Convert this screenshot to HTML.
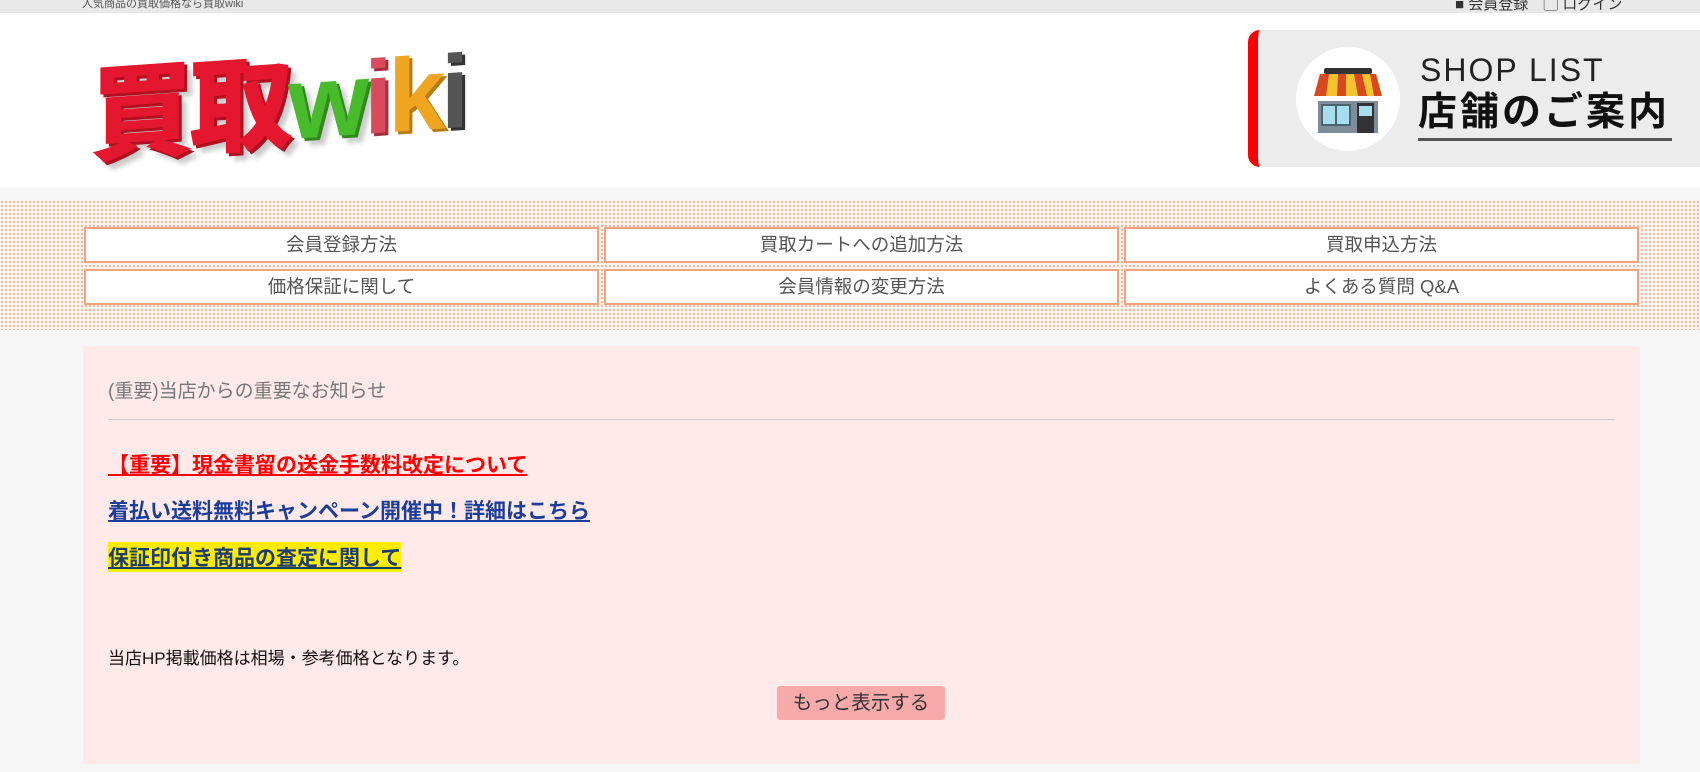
<!DOCTYPE html>
<html><head><meta charset="utf-8"><style>
*{margin:0;padding:0;box-sizing:border-box}
body{width:1700px;height:772px;overflow:hidden;background:#f6f6f6;font-family:"Liberation Sans","Noto Sans CJK JP",sans-serif;position:relative}
.top{position:absolute;left:0;top:0;width:1700px;height:13px;background:#e9e8e8;font-size:11px;color:#555;overflow:hidden}
.header{position:absolute;left:0;top:13px;width:1700px;height:174px;background:#fff}
.band{position:absolute;left:0;top:200px;width:1700px;height:130px;background-color:#fbf3ee;background-image:radial-gradient(circle,#f0a98a 0.8px,transparent 1.1px);background-size:4px 4px}
.btn{position:absolute;background:#fff;border:2px solid #f3a27f;font-size:18.5px;color:#555;text-align:center;line-height:31px;height:36px}
.box{position:absolute;left:83px;top:346px;width:1557px;height:418px;background:#ffe9e9}
a{font-weight:bold;font-size:21px;text-decoration:underline;position:absolute;left:25px}
</style></head><body>
<div class="top"><span style="position:absolute;left:82px;top:-5px">人気商品の買取価格なら買取wiki</span><span style="position:absolute;left:1455px;top:-7px;font-size:15px;color:#333">■ 会員登録　▢ ログイン</span></div>
<div class="header">
 <div style="position:absolute;left:90px;top:22px;font-weight:900;font-size:104px;letter-spacing:-5px;line-height:120px;font-family:'Noto Sans CJK JP',sans-serif;transform:skewY(-4deg)">
  <span style="color:#e5172e;text-shadow:3px 3px 0 #b0101f,8px 8px 5px #ccc">買取</span><span style="color:#48bb2c;text-shadow:3px 3px 0 #2e8a1a,8px 8px 5px #ccc;font-family:'Liberation Sans'">w</span><span style="color:#d84a5c;text-shadow:3px 3px 0 #a03040;font-family:'Liberation Sans'">i</span><span style="color:#f0a520;text-shadow:3px 3px 0 #b67a10;font-family:'Liberation Sans'">k</span><span style="color:#555;text-shadow:3px 3px 0 #333;font-family:'Liberation Sans'">i</span>
 </div>
 <div style="position:absolute;left:1248px;top:17px;width:452px;height:137px;background:#ececec;border-left:10px solid #f00;border-radius:12px 0 0 12px">
  <div style="position:absolute;left:38px;top:17px;width:104px;height:104px;border-radius:50%;background:#fff">
   <svg width="104" height="104" viewBox="0 0 104 104">
    <rect x="22" y="54" width="60" height="32" fill="#7f8c99"/>
    <rect x="26" y="58" width="28" height="20" fill="#a8dcef" stroke="#4a6470" stroke-width="2"/>
    <line x1="40" y1="58" x2="40" y2="78" stroke="#4a6470" stroke-width="2"/>
    <rect x="61" y="56" width="17" height="30" fill="#333"/>
    <rect x="63" y="59" width="13" height="10" fill="#a8dcef"/>
    <rect x="28" y="21" width="48" height="6" rx="2" fill="#333"/>
    <path d="M24 27h56l6 22H18z" fill="#f4c430"/>
    <path d="M24 27h9l-3 22h-12zM42 27h8l0 22h-9zM58 27h8l5 22h-9zM74 27h6l6 22h-8z" fill="#d9481f"/>
   </svg>
  </div>
  <div style="position:absolute;left:162px;top:22px;font-size:32px;letter-spacing:2px;color:#222">SHOP LIST</div>
  <div style="position:absolute;left:160px;top:58px;font-size:39px;font-weight:bold;color:#111;letter-spacing:3px;border-bottom:3px solid #555;line-height:50px;padding-right:2px">店舗のご案内</div>
 </div>
</div>
<div class="band"></div>
<div class="btn" style="left:84px;top:227px;width:515px">会員登録方法</div>
<div class="btn" style="left:604px;top:227px;width:515px">買取カートへの追加方法</div>
<div class="btn" style="left:1124px;top:227px;width:515px">買取申込方法</div>
<div class="btn" style="left:84px;top:269px;width:515px">価格保証に関して</div>
<div class="btn" style="left:604px;top:269px;width:515px">会員情報の変更方法</div>
<div class="btn" style="left:1124px;top:269px;width:515px">よくある質問 Q&amp;A</div>
<div class="box">
 <div style="position:absolute;left:25px;top:30px;font-size:19px;color:#777">(重要)当店からの重要なお知らせ</div>
 <div style="position:absolute;left:25px;top:73px;width:1507px;height:1px;background:#ccc"></div>
 <a style="top:103px;color:#f00">【重要】現金書留の送金手数料改定について</a>
 <a style="top:149px;color:#1b3d9c">着払い送料無料キャンペーン開催中！詳細はこちら</a>
 <a style="top:196px;color:#1b3d6c;background:#ffec00">保証印付き商品の査定に関して</a>
 <div style="position:absolute;left:25px;top:298px;font-size:17px;color:#111">当店HP掲載価格は相場・参考価格となります。</div>
 <div style="position:absolute;left:694px;top:340px;width:168px;height:34px;background:#f8aaaa;border-radius:3px;font-size:19.5px;color:#333;text-align:center;line-height:34px">もっと表示する</div>
</div>
</body></html>
